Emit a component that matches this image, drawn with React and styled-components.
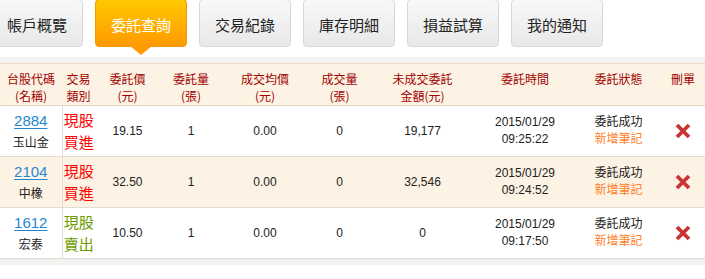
import React from "react";
import styled, { createGlobalStyle } from "styled-components";

const Global = createGlobalStyle`
  html, body { margin: 0; padding: 0; background: #fff; }
  body { font-family: "Liberation Sans", Arial, "Noto Sans CJK TC", sans-serif; overflow: hidden; }
`;

const Page = styled.div`
  width: 705px;
  overflow: hidden;
`;

const TabBar = styled.div`
  display: flex;
  gap: 12px;
  margin: -1px 0 0 -9px;
  height: 58px;
`;

const Tab = styled.div`
  position: relative;
  box-sizing: border-box;
  width: 92px;
  height: 48px;
  flex: none;
  display: flex;
  align-items: center;
  justify-content: center;
  padding-top: 2px;
  border-radius: 4px;
  font-size: 15px;
  font-family: "Noto Sans CJK TC", sans-serif;
  color: ${(p) => (p.$active ? "#fff" : "#222")};
  border: 1px solid ${(p) => (p.$active ? "#f39a00" : "#d9d9d9")};
  background: ${(p) =>
    p.$active
      ? "linear-gradient(#ffc800, #ff9a00)"
      : "linear-gradient(#f8f8f8, #e8e8e8)"};
  ${(p) =>
    p.$active &&
    `
    &::after {
      content: "";
      position: absolute;
      left: 50%;
      top: 100%;
      margin-left: -11px;
      border-left: 11px solid transparent;
      border-right: 11px solid transparent;
      border-top: 9px solid #ff9a00;
    }
  `}
`;

const Strip = styled.div`
  height: 6px;
  background: #f2f2f2;
`;

const Table = styled.table`
  width: 705px;
  table-layout: fixed;
  border-collapse: collapse;
  border-top: 1px solid #ecdcc6;
  border-bottom: 1px solid #e6dbcf;
`;

const Th = styled.th`
  background: #fdf3e4;
  height: 42px;
  padding: 6px 0 0;
  box-sizing: border-box;
  vertical-align: top;
  font-weight: normal;
  font-size: 12px;
  line-height: 17px;
  color: #a00000;
  text-align: center;
  border-bottom: 1px solid #e6d7c3;
  font-family: "Noto Sans CJK TC", sans-serif;
`;

const Tr = styled.tr`
  background: ${(p) => (p.$alt ? "#fdf3e4" : "#fff")};
`;

const Td = styled.td`
  height: 50px;
  padding: 0;
  text-align: center;
  vertical-align: middle;
  font-size: 12px;
  color: #222;
  border-bottom: 1px solid #e6dbcf;
  ${(p) => p.$divider && "border-right: 1px solid #e6dbcf;"}
`;

const CodeLink = styled.a`
  display: block;
  font-size: 15px;
  line-height: 21px;
  color: #1e88d3;
  text-decoration: underline;
  text-underline-offset: 2px;
`;

const Name = styled.div`
  font-size: 12px;
  line-height: 21px;
  color: #222;
  font-family: "Noto Sans CJK TC", sans-serif;
`;

const TradeType = styled.div`
  font-size: 15px;
  line-height: 22px;
  color: ${(p) => (p.$sell ? "#6f9b00" : "#ff0000")};
  font-family: "Noto Sans CJK TC", sans-serif;
`;

const Lines = styled.div`
  font-size: 12px;
  line-height: 17px;
  color: ${(p) => p.$color || "#222"};
  font-family: "Liberation Sans", "Noto Sans CJK TC", sans-serif;
`;

const DeleteIcon = () => (
  <svg width="16" height="16" viewBox="0 0 16 16" style={{ display: "block", margin: "0 auto" }}>
    <path d="M2 2 L14 14 M14 2 L2 14" stroke="#cc3333" strokeWidth="3.8" />
  </svg>
);

const tabs = ["帳戶概覽", "委託查詢", "交易紀錄", "庫存明細", "損益試算", "我的通知"];

const headers = [
  ["台股代碼", "(名稱)"],
  ["交易", "類別"],
  ["委託價", "(元)"],
  ["委託量", "(張)"],
  ["成交均價", "(元)"],
  ["成交量", "(張)"],
  ["未成交委託", "金額(元)"],
  ["委託時間"],
  ["委託狀態"],
  ["刪單"],
];

const widths = [62, 33, 65, 62, 86, 63, 103, 102, 85, 44];

const rows = [
  { code: "2884", name: "玉山金", type: ["現股", "買進"], sell: false, price: "19.15", qty: "1", avg: "0.00", done: "0", amt: "19,177", date: "2015/01/29", time: "09:25:22" },
  { code: "2104", name: "中橡", type: ["現股", "買進"], sell: false, price: "32.50", qty: "1", avg: "0.00", done: "0", amt: "32,546", date: "2015/01/29", time: "09:24:52" },
  { code: "1612", name: "宏泰", type: ["現股", "賣出"], sell: true, price: "10.50", qty: "1", avg: "0.00", done: "0", amt: "0", date: "2015/01/29", time: "09:17:50" },
];

export default function App() {
  return (
    <Page>
      <Global />
      <TabBar>
        {tabs.map((t, i) => (
          <Tab key={t} $active={i === 1}>{t}</Tab>
        ))}
      </TabBar>
      <Strip />
      <Table>
        <colgroup>
          {widths.map((w, i) => (
            <col key={i} style={{ width: w }} />
          ))}
        </colgroup>
        <thead>
          <tr>
            {headers.map((h, i) => (
              <Th key={i}>
                {h.map((l, j) => (
                  <div key={j}>{l}</div>
                ))}
              </Th>
            ))}
          </tr>
        </thead>
        <tbody>
          {rows.map((r, i) => (
            <Tr key={r.code} $alt={i % 2 === 1}>
              <Td $divider>
                <CodeLink href="#">{r.code}</CodeLink>
                <Name>{r.name}</Name>
              </Td>
              <Td>
                <TradeType $sell={r.sell}>{r.type[0]}</TradeType>
                <TradeType $sell={r.sell}>{r.type[1]}</TradeType>
              </Td>
              <Td>{r.price}</Td>
              <Td>{r.qty}</Td>
              <Td>{r.avg}</Td>
              <Td>{r.done}</Td>
              <Td>{r.amt}</Td>
              <Td>
                <Lines>{r.date}</Lines>
                <Lines>{r.time}</Lines>
              </Td>
              <Td>
                <Lines>委託成功</Lines>
                <Lines $color="#ff7f2a">新增筆記</Lines>
              </Td>
              <Td>
                <DeleteIcon />
              </Td>
            </Tr>
          ))}
        </tbody>
      </Table>
      <Strip />
    </Page>
  );
}
